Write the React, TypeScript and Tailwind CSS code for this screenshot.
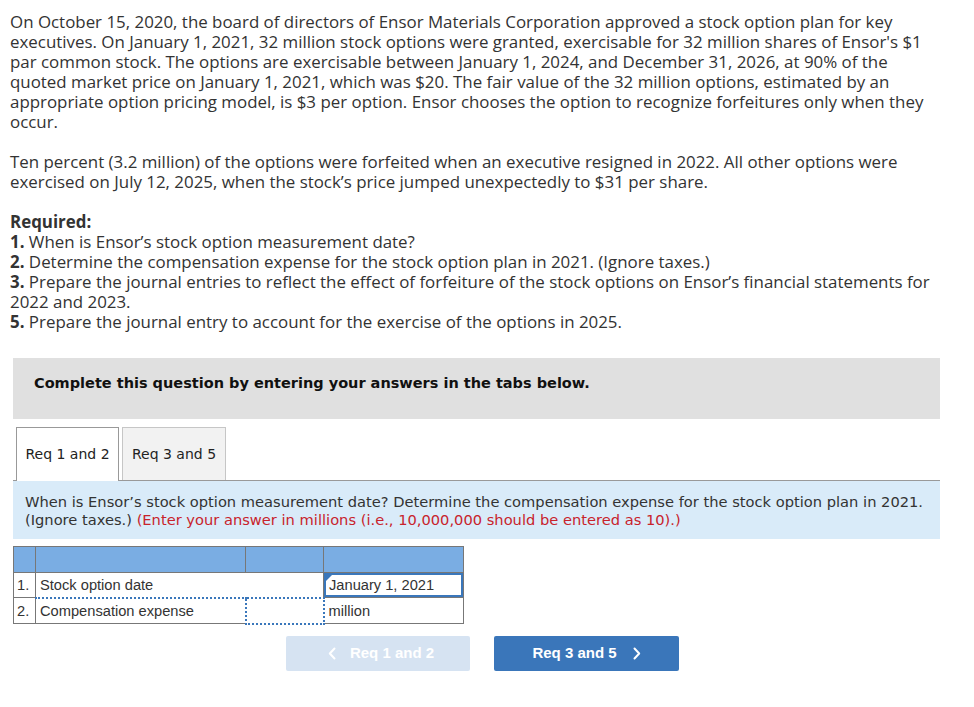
import React from "react";

const body = { fontFamily: "'Open Sans', 'Liberation Sans', sans-serif" };
const verdana = { fontFamily: "'DejaVu Sans', Verdana, sans-serif" };
const arial = { fontFamily: "'Liberation Sans', Arial, sans-serif" };

function Chevron({ dir }: { dir: "left" | "right" }) {
  return (
    <svg width="8" height="13" viewBox="0 0 8 13" fill="none" className="shrink-0">
      {dir === "left" ? (
        <path d="M6.5 1.5 L1.8 6.5 L6.5 11.5" stroke="white" strokeWidth="2" strokeLinecap="round" strokeLinejoin="round" />
      ) : (
        <path d="M1.5 1.5 L6.2 6.5 L1.5 11.5" stroke="white" strokeWidth="2" strokeLinecap="round" strokeLinejoin="round" />
      )}
    </svg>
  );
}

export default function App() {
  return (
    <div className="w-[974px] min-h-[707px] bg-white">
      <div className="px-[10px] pt-[12px] text-[16.9px] leading-[20px] text-[#333] whitespace-nowrap" style={body}>
        <p>
          On October 15, 2020, the board of directors of Ensor Materials Corporation approved a stock option plan for key
          <br />
          executives. On January 1, 2021, 32 million stock options were granted, exercisable for 32 million shares of Ensor's $1
          <br />
          par common stock. The options are exercisable between January 1, 2024, and December 31, 2026, at 90% of the
          <br />
          quoted market price on January 1, 2021, which was $20. The fair value of the 32 million options, estimated by an
          <br />
          appropriate option pricing model, is $3 per option. Ensor chooses the option to recognize forfeitures only when they
          <br />
          occur.
        </p>
        <p className="mt-[20px]">
          Ten percent (3.2 million) of the options were forfeited when an executive resigned in 2022. All other options were
          <br />
          exercised on July 12, 2025, when the stock’s price jumped unexpectedly to $31 per share.
        </p>
        <div className="mt-[20px]">
          <p className="font-bold">Required:</p>
          <p>
            <b>1.</b> When is Ensor’s stock option measurement date?
          </p>
          <p>
            <b>2.</b> Determine the compensation expense for the stock option plan in 2021. (Ignore taxes.)
          </p>
          <p>
            <b>3.</b> Prepare the journal entries to reflect the effect of forfeiture of the stock options on Ensor’s financial statements for
            <br />
            2022 and 2023.
          </p>
          <p>
            <b>5.</b> Prepare the journal entry to account for the exercise of the options in 2025.
          </p>
        </div>
      </div>

      <div className="mx-[13px] mt-[26px] w-[927px]">
        <div className="h-[61px] bg-[#e0e0e0] pl-[21px] pt-[15px]" style={verdana}>
          <p className="text-[14.5px] leading-[20px] font-bold text-[#111]">
            Complete this question by entering your answers in the tabs below.
          </p>
        </div>

        <div className="mt-[8px] flex items-end gap-[3px] border-b border-[#999] pl-[3px]" style={verdana}>
          <div className="-mb-px flex h-[54px] w-[103px] items-center justify-center border border-b-0 border-[#999] bg-white text-[14px] text-[#222]">
            Req 1 and 2
          </div>
          <div className="flex h-[53px] w-[104px] items-center justify-center border border-b-0 border-[#c6c6c6] bg-[#f2f2f2] text-[14px] text-[#222]">
            Req 3 and 5
          </div>
        </div>

        <div className="bg-[#d9ebf9] pl-[12px] pt-[12px] pb-[10px] text-[14.67px] leading-[18px] text-[#333]" style={verdana}>
          <p>
            When is Ensor’s stock option measurement date? Determine the compensation expense for the stock option plan in 2021.
            <br />
            (Ignore taxes.) <span className="text-[#c8232c]">(Enter your answer in millions (i.e., 10,000,000 should be entered as 10).)</span>
          </p>
        </div>

        <table className="mt-[7px] w-[451px] border-collapse text-[14.67px] text-[#333]" style={arial}>
          <tbody>
            <tr className="h-[26px] bg-[#7aade3]">
              <td className="w-[22px] border border-[#777]"></td>
              <td className="w-[210px] border border-[#777]"></td>
              <td className="w-[78px] border border-[#777]"></td>
              <td className="border border-[#777]"></td>
            </tr>
            <tr className="h-[25px]">
              <td className="border border-[#777] pl-[3px] text-[#333]">1.</td>
              <td colSpan={2} className="border border-[#777] pl-[4px]">Stock option date</td>
              <td className="relative border border-[#777] p-0">
                <div className="relative h-[24px] border-2 border-[#3a77bb] pl-[3px] leading-[20px]">
                  <span className="absolute left-0 top-0 h-0 w-0 border-t-[6px] border-r-[6px] border-t-[#3a77bb] border-r-transparent"></span>
                  January 1, 2021
                </div>
              </td>
            </tr>
            <tr className="h-[26px]">
              <td className="border border-[#777] pl-[3px]">2.</td>
              <td className="border border-[#777] border-t-2 border-t-[#3a77bb] pl-[4px]" style={{ borderStyle: "dotted solid solid solid" }}>
                Compensation expense
              </td>
              <td className="border-2 border-dotted border-[#3a77bb]"></td>
              <td className="border border-[#777] pl-[4px]">million</td>
            </tr>
          </tbody>
        </table>

        <div className="mt-[11px] ml-[273px] flex gap-[24px] text-[15px] font-bold text-white" style={arial}>
          <div className="flex h-[35px] w-[184px] items-center justify-center gap-[14px] rounded-[2px] bg-[#d6e3f2] pl-[6px]">
            <Chevron dir="left" />
            <span>Req 1 and 2</span>
          </div>
          <div className="flex h-[35px] w-[185px] items-center justify-center gap-[16px] rounded-[2px] bg-[#3a76ba]">
            <span>Req 3 and 5</span>
            <Chevron dir="right" />
          </div>
        </div>
      </div>
    </div>
  );
}
